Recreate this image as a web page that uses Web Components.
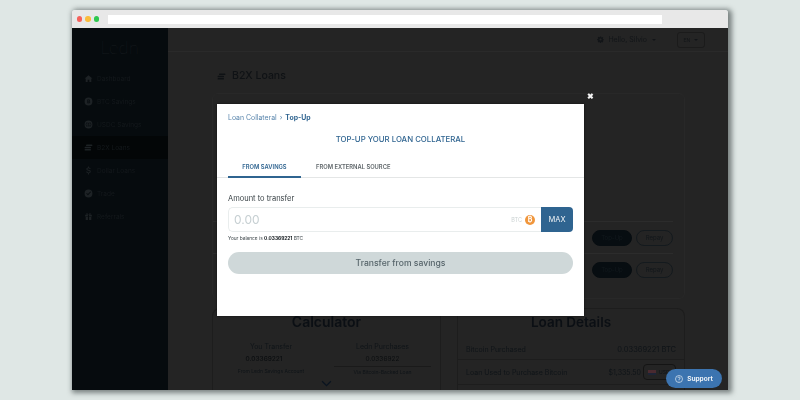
<!DOCTYPE html>
<html lang="en">
<head>
<meta charset="utf-8">
<title>Ledn - Top-Up</title>
<style>
  html, body { margin: 0; height: 400px; overflow: hidden; background: #dfe7e5; font-family: Inter, "Liberation Sans", sans-serif; }
</style>
</head>
<body>
<app-window>
  <side-nav slot="side">
    <nav-item icon="home">Dashboard</nav-item>
    <nav-item icon="btc">BTC Savings</nav-item>
    <nav-item icon="usdc">USDC Savings</nav-item>
    <nav-item icon="coins" active>B2X Loans</nav-item>
    <nav-item icon="dollar">Dollar Loans</nav-item>
    <nav-item icon="trade">Trade</nav-item>
    <nav-item icon="gift">Referrals</nav-item>
  </side-nav>
  <top-bar slot="top"></top-bar>
  <loans-page slot="page"></loans-page>
  <topup-modal slot="modal"></topup-modal>
  <support-button slot="modal"></support-button>
</app-window>

<script>
const icons = {
  home: `<path d="M8 2 1 8h2v6h3.5v-4h3v4H13V8h2z"/>`,
  btc: `<path fill-rule="evenodd" d="M8 1a7 7 0 1 0 0 14A7 7 0 0 0 8 1zM6 4.5h3a1.7 1.7 0 0 1 1 3.1 1.8 1.8 0 0 1-1 3.4H6zm1.4 1.2v1.4H9a.7.7 0 0 0 0-1.4zm0 2.5v1.6H9.2a.8.8 0 0 0 0-1.6z"/>`,
  usdc: `<path fill-rule="evenodd" d="M8 1a7 7 0 1 0 0 14A7 7 0 0 0 8 1zm-2 2.6v1.2a3.5 3.5 0 0 0 0 6.4v1.2a4.7 4.7 0 0 1 0-8.8zm4 0a4.7 4.7 0 0 1 0 8.8v-1.2a3.5 3.5 0 0 0 0-6.4zM7.4 5h1.2v.8c.8.2 1.3.7 1.4 1.4H8.9c-.1-.3-.4-.5-.9-.5s-.8.2-.8.5.3.4 1 .6c1.1.2 1.9.6 1.9 1.5 0 .8-.6 1.3-1.5 1.5v.8H7.4v-.8c-.9-.2-1.4-.7-1.5-1.5h1.1c.1.4.5.6 1 .6s.9-.2.9-.5-.3-.5-1.1-.7C7.1 8.500 6.100 8.200 6.100 7.200c0-.7.5-1.200 1.300-1.400z"/>`,
  coins: `<path d="M5 2.500h8.500a1 1 0 0 1 0 3H5a1 1 0 0 1 0-3zM2.500 6.500H11a1 1 0 0 1 0 3H2.500a1 1 0 0 1 0-3zM2.500 10.500H11a1 1 0 0 1 0 3H2.500a1 1 0 0 1 0-3z"/>`,
  dollar: `<path d="M7.200 1h1.600v1.600c1.700.2 2.900 1.200 3 2.800H10c-.1-.8-.8-1.300-2-1.300S6 4.600 6 5.300c0 .8.700 1.100 2.300 1.500 2.200.5 3.700 1.200 3.700 3.100 0 1.700-1.300 2.800-3.200 3V15H7.200v-2.100C5.300 12.700 4 11.500 4 9.800h1.800c.1 1 .9 1.600 2.200 1.600s2.200-.6 2.200-1.400c0-.9-.8-1.200-2.500-1.600C5.600 7.900 4.200 7.200 4.200 5.400c0-1.500 1.200-2.600 3-2.800z"/>`,
  trade: `<path fill-rule="evenodd" d="M8 1a7 7 0 1 0 0 14A7 7 0 0 0 8 1zm3.500 3.500 1 1L7 11 4 8l1-1 2 2z"/>`,
  gift: `<path d="M2 5h5v3H2zM9 5h5v3H9zM3 9h4v5H3zM9 9h4v5H9zM5 2c1 0 2.300 1 3 2.500C8.700 3 10 2 11 2c1.500 0 1.500 2.500-.5 2.500h-5C3.500 4.500 3.500 2 5 2z"/>`,
  gear: `<path fill-rule="evenodd" d="M6.800 1h2.400l.4 1.900 1.200.5 1.600-1 1.700 1.700-1 1.600.5 1.200 1.900.4v2.400l-1.900.4-.5 1.200 1 1.600-1.700 1.700-1.600-1-1.200.5-.4 1.900H6.800l-.4-1.900-1.200-.5-1.600 1-1.700-1.700 1-1.600-.5-1.200L.5 9.200V6.800l1.900-.4.500-1.200-1-1.600 1.700-1.700 1.600 1 1.200-.5zM8 5.500a2.500 2.500 0 1 0 0 5 2.500 2.500 0 0 0 0-5z"/>`
};

function svgIcon(name) {
  return `<svg viewBox="0 0 16 16" width="100%" height="100%" fill="currentColor">${icons[name]}</svg>`;
}

class AppWindow extends HTMLElement {
  constructor() {
    super();
    this.attachShadow({ mode: "open" });
    this.shadowRoot.innerHTML = `
    <style>
      :host {
        display: block; width: 656px; height: 380px; margin: 10px auto 0;
        box-shadow: 2px 1px 5px 2px rgba(40,50,50,.55);
        border-radius: 3px 3px 0 0; overflow: hidden; position: relative;
        filter: blur(.35px);
      }
      .chrome { height: 18px; background: #e8e8e8; display: flex; align-items: center; padding: 0 0 0 4.5px; gap: 3px; box-sizing: border-box; }
      .dot { width: 5.5px; height: 5.5px; border-radius: 50%; }
      .url { width: 554px; height: 9px; background: #fff; margin-left: 5.5px; }
      .body { height: 362px; display: flex; background: #242424; }
      .main { flex: 1; min-width: 0; display: flex; flex-direction: column; }
    </style>
    <div class="chrome">
      <span class="dot" style="background:#f5615c"></span>
      <span class="dot" style="background:#fbbc3c"></span>
      <span class="dot" style="background:#2fc84f"></span>
      <span class="url"></span>
    </div>
    <div class="body">
      <slot name="side"></slot>
      <div class="main"><slot name="top"></slot><slot name="page"></slot></div>
    </div>
    <slot name="modal"></slot>`;
  }
}

class SideNav extends HTMLElement {
  constructor() {
    super();
    this.attachShadow({ mode: "open" });
    this.shadowRoot.innerHTML = `
    <style>
      :host { display: block; width: 96px; flex: none; background: #060b0e; }
      .logo { height: 39px; padding-top: 8px; box-sizing: border-box; text-align: center; font: 200 18px/22px Lato, Inter, sans-serif; color: #23282c; letter-spacing: .5px; }
      nav { display: flex; flex-direction: column; }
    </style>
    <div class="logo">Ledn</div>
    <nav><slot></slot></nav>`;
  }
}

class NavItem extends HTMLElement {
  constructor() {
    super();
    this.attachShadow({ mode: "open" });
    this.shadowRoot.innerHTML = `
    <style>
      :host { display: flex; align-items: center; height: 23px; padding-left: 11.5px; gap: 4.5px; color: #14191c; font-size: 6.5px; font-family: Inter, sans-serif; }
      :host([active]) { background: #030607; }
      .i { width: 9px; height: 9px; color: #1d2225; flex: none; }
    </style>
    <span class="i">${svgIcon(this.getAttribute("icon"))}</span><slot></slot>`;
  }
}

class TopBar extends HTMLElement {
  constructor() {
    super();
    this.attachShadow({ mode: "open" });
    this.shadowRoot.innerHTML = `
    <style>
      :host { display: flex; flex: none; align-items: center; justify-content: flex-end; height: 24px; box-sizing: border-box; padding: 0 23px 0 0; border-bottom: 1px solid #2a2a2a; color: #121518; font-size: 7px; font-family: Inter, sans-serif; }
      .gear { width: 7px; height: 7px; margin-right: 4px; }
      .caret { width: 0; height: 0; border: 2px solid transparent; border-top-color: #121518; border-bottom: 0; margin-left: 5px; }
      .lang { display: flex; align-items: center; width: 28px; height: 16px; box-sizing: border-box; border: 1px solid #1b1b1b; border-radius: 3px; justify-content: center; margin-left: 21px; font-size: 5px; }
      .lang .caret { margin-left: 4px; }
    </style>
    <span class="gear">${svgIcon("gear")}</span>
    <span>Hello, Silvio</span><span class="caret"></span>
    <span class="lang">EN<span class="caret"></span></span>`;
  }
}

class LoansPage extends HTMLElement {
  constructor() {
    super();
    this.attachShadow({ mode: "open" });
    this.shadowRoot.innerHTML = `
    <style>
      :host { display: block; padding: 16px 43px 0 44px; color: #0e1318; font-family: Inter, sans-serif; overflow: hidden; flex: 1; min-height: 0; }
      h1 { display: flex; align-items: center; gap: 6px; margin: 0 0 11px 5px; height: 14px; font-size: 10.5px; font-weight: 500; color: #0f1215; }
      h1 span { width: 9px; height: 9px; }
      .top { height: 206px; border: 1px solid #282828; border-radius: 6px; box-sizing: border-box; padding: 127px 11px 0 0; }
      .row { display: flex; justify-content: flex-end; align-items: center; gap: 4px; height: 31px; border-top: 1px solid #2c2c2c; }
      .btn { width: 40px; height: 16px; line-height: 14px; text-align: center; box-sizing: border-box; border-radius: 8px; font-size: 6px; background: #070d11; color: #12191d; border: 1px solid #070d11; }
      .btn.o { width: 37px; background: none; color: #11161a; border-color: #141a1e; }
      .bottom { display: grid; grid-template-columns: 229px 228px; justify-content: space-between; margin-top: 9px; }
      .card { height: 90px; box-sizing: border-box; border: 1px solid #1d1d1d; border-bottom: 0; border-radius: 8px 8px 0 0; }
      h2 { margin: 4px 0 0; text-align: center; font-size: 14px; line-height: 18px; font-weight: 600; color: #0b0f14; }
      h2.s { font-size: 13.5px; }
      .cols { display: grid; grid-template-columns: 70px 97px; column-gap: 28px; padding-left: 23px; text-align: center; margin-top: 11px; font-size: 7px; line-height: 10px; color: #0f1418; }
      .cols b { display: block; font-size: 6.5px; font-weight: 500; color: #0b0e10; margin: 2px 0 3px; line-height: 10px; padding-right: 14px; }
      .cols small { display: block; font-size: 5px; line-height: 8px; white-space: nowrap; }
      .cols .u b { border-bottom: 1px solid #1a1a1a; padding: 0 0 2px; font-weight: 400; margin-bottom: 1px; }
      .chev { width: 11px; height: 7px; margin: 4px auto 0; display: block; }
      .d { display: flex; align-items: center; justify-content: space-between; padding: 0 8px; font-size: 7px; color: #0f1418; }
      .d.a { height: 20px; margin-top: 8px; border-bottom: 1px solid #1d1d1d; }
      .d.a span:last-child { font-size: 7.5px; }
      .d.b { height: 24px; border-bottom: 1px solid #1d1d1d; }
      .v { display: flex; align-items: center; gap: 2px; font-size: 7px; }
      .usd { display: flex; align-items: center; gap: 3px; width: 33px; height: 16px; box-sizing: border-box; border: 1px solid #141414; border-radius: 4px; padding-left: 4px; font-size: 5px; }
      .flag { width: 8px; height: 5px; background: linear-gradient(#4a2a30 50%, #1d2436 50%); }
    </style>
    <h1><span>${svgIcon("coins")}</span>B2X Loans</h1>
    <div class="top">
      <div class="row"><span class="btn">Top-Up</span><span class="btn o">Repay</span></div>
      <div class="row"><span class="btn">Top-Up</span><span class="btn o">Repay</span></div>
    </div>
    <div class="bottom">
      <div class="card">
        <h2>Calculator</h2>
        <div class="cols">
          <div>You Transfer<b>0.03369221</b><small>From Ledn Savings Account</small></div>
          <div class="u">Ledn Purchases<b>0.0336922</b><small>Via Bitcoin-Backed Loan</small></div>
        </div>
        <svg class="chev" viewBox="0 0 12 8" fill="none" stroke="#0a1420" stroke-width="1.5"><path d="M1 1.5 6 6.5 11 1.5"/></svg>
      </div>
      <div class="card">
        <h2 class="s">Loan Details</h2>
        <div class="d a"><span>Bitcoin Purchased</span><span>0.03369221 BTC</span></div>
        <div class="d b"><span>Loan Used to Purchase Bitcoin</span><span class="v">$1,335.50 <span class="usd"><i class="flag"></i>USD</span></span></div>
      </div>
    </div>`;
  }
}

class TopupModal extends HTMLElement {
  constructor() {
    super();
    this.attachShadow({ mode: "open" });
    this.shadowRoot.innerHTML = `
    <style>
      :host {
        position: absolute; left: 145px; top: 94px; width: 367px; height: 212px;
        box-sizing: border-box; background: #fff; box-shadow: 0 0 2px rgba(0,0,0,.6);
        padding: 0 11px; font-family: Inter, sans-serif; color: #333;
      }
      .close { position: absolute; right: -10px; top: -12px; color: #f2f2f2; font-size: 8px; line-height: 9px; font-weight: 800; }
      .crumb { height: 28px; padding-top: 9px; box-sizing: border-box; font-size: 6.9px; line-height: 10px; color: #5a86ad; display: flex; gap: 3px; }
      .crumb b { color: #2f6490; font-weight: 700; }
      h3 { margin: 0; text-align: center; font-size: 7.8px; line-height: 14px; font-weight: 500; color: #2f6490; }
      .tabs { display: flex; margin: 12px -11px 0; padding: 0 11px; height: 19px; border-bottom: 1px solid #e4e6e6; font-size: 5.8px; font-weight: 600; line-height: 18px; color: #5d6468; }
      .tab { text-align: center; }
      .tab.on { width: 73px; color: #2f6490; border-bottom: 2px solid #2f6490; height: 18px; }
      .tab.off { margin-left: 15px; }
      label { display: block; margin-top: 16px; font-size: 7.5px; line-height: 10px; color: #3a4347; }
      .field { display: flex; margin-top: 3px; height: 25px; }
      .box { flex: 1; display: flex; align-items: center; box-sizing: border-box; border: 1px solid #e9eded; border-right: 0; border-radius: 5px 0 0 5px; padding: 0 6px 0 5px; }
      .amt { flex: 1; font-size: 12px; color: #c6cfd2; }
      .unit { font-size: 5.5px; color: #ccd3d3; margin-right: 3px; }
      .coin { width: 10px; height: 10px; border-radius: 50%; background: #f0963c; color: #fff; font-size: 7px; font-weight: 700; line-height: 10px; text-align: center; }
      .max { width: 32px; background: #2f6490; color: #eef3f6; font-size: 7.5px; font-weight: 400; display: flex; align-items: center; justify-content: center; border-radius: 0 4px 4px 0; }
      .bal { font-size: 4.8px; line-height: 8px; margin-top: 2px; color: #3a4347; }
      .bal b { color: #10171b; }
      .go { margin-top: 10px; height: 22px; border-radius: 11px; background: #cfd8d9; color: #56646a; text-align: center; font-size: 8.6px; line-height: 22px; font-weight: 500; }
    </style>
    <span class="close">&#10006;</span>
    <div class="crumb"><span>Loan Collateral</span><span>&#8250;</span><b>Top-Up</b></div>
    <h3>TOP-UP YOUR LOAN COLLATERAL</h3>
    <div class="tabs"><span class="tab on">FROM SAVINGS</span><span class="tab off">FROM EXTERNAL SOURCE</span></div>
    <label>Amount to transfer</label>
    <div class="field">
      <div class="box"><span class="amt">0.00</span><span class="unit">BTC</span><span class="coin">&#8383;</span></div>
      <div class="max">MAX</div>
    </div>
    <div class="bal">Your balance is <b>0.03369221</b> BTC</div>
    <div class="go">Transfer from savings</div>`;
  }
}

class SupportButton extends HTMLElement {
  constructor() {
    super();
    this.attachShadow({ mode: "open" });
    this.shadowRoot.innerHTML = `
    <style>
      :host { position: absolute; left: 594px; top: 359px; width: 56px; height: 19px; display: flex; align-items: center; justify-content: center; gap: 4px; background: #3c74b0; border-radius: 10px; color: #eef3f8; font: 700 6.5px Inter, sans-serif; }
      svg { width: 8px; height: 8px; }
    </style>
    <svg viewBox="0 0 16 16" fill="none" stroke="currentColor" stroke-width="1.3"><circle cx="8" cy="8" r="7"/><path d="M5.8 6.2A2.2 2.2 0 1 1 8 8.4V10M8 11.3v1.4"/></svg>
    <span>Support</span>`;
  }
}

customElements.define("app-window", AppWindow);
customElements.define("side-nav", SideNav);
customElements.define("nav-item", NavItem);
customElements.define("top-bar", TopBar);
customElements.define("loans-page", LoansPage);
customElements.define("topup-modal", TopupModal);
customElements.define("support-button", SupportButton);
</script>
</body>
</html>
